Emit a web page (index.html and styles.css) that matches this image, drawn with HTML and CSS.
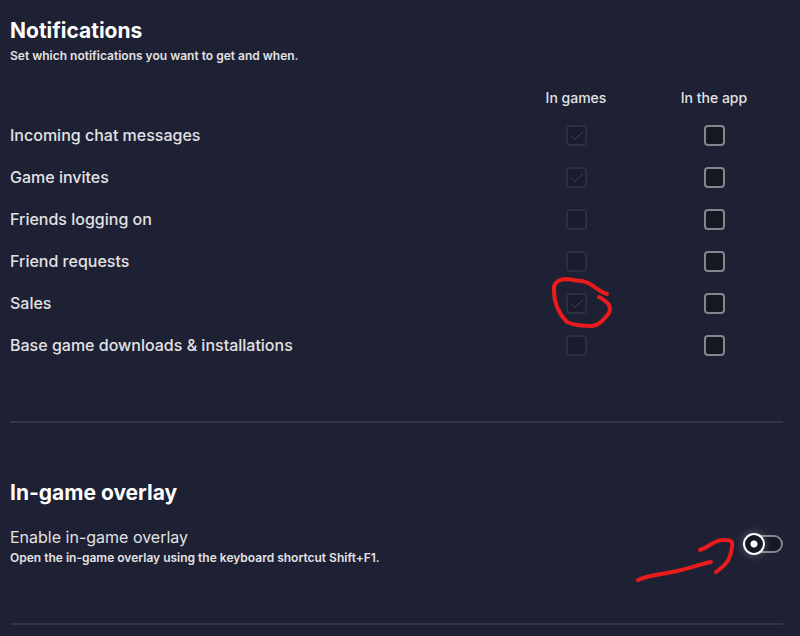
FILE: index.html
```html
<!DOCTYPE html>
<html lang="en">

<head>
    <meta charset="UTF-8">
    <meta name="viewport" content="width=device-width, initial-scale=1.0">
    <title>Settings</title>
    <link rel="stylesheet" href="styles.css">
</head>
<body>
<main class="settings">
    <section class="section">
        <h2>Notifications</h2>
        <p class="hint">Set which notifications you want to get and when.</p>
        <table class="options">
            <thead>
                <tr>
                    <td></td>
                    <th scope="col" id="games">In games</th>
                    <th scope="col" id="app">In the app</th>
                </tr>
            </thead>
            <tbody>
                <tr>
                    <th scope="row" id="chat">Incoming chat messages</th>
                    <td><input type="checkbox" class="check" aria-labelledby="chat games" checked disabled></td>
                    <td><input type="checkbox" class="check" aria-labelledby="chat app"></td>
                </tr>
                <tr>
                    <th scope="row" id="invites">Game invites</th>
                    <td><input type="checkbox" class="check" aria-labelledby="invites games" checked disabled></td>
                    <td><input type="checkbox" class="check" aria-labelledby="invites app"></td>
                </tr>
                <tr>
                    <th scope="row" id="friends">Friends logging on</th>
                    <td><input type="checkbox" class="check" aria-labelledby="friends games" disabled></td>
                    <td><input type="checkbox" class="check" aria-labelledby="friends app"></td>
                </tr>
                <tr>
                    <th scope="row" id="requests">Friend requests</th>
                    <td><input type="checkbox" class="check" aria-labelledby="requests games" disabled></td>
                    <td><input type="checkbox" class="check" aria-labelledby="requests app"></td>
                </tr>
                <tr>
                    <th scope="row" id="sales">Sales</th>
                    <td>
                        <div class="marked">
                            <input type="checkbox" class="check" aria-labelledby="sales games" checked disabled>
                            <svg class="circle-mark" width="64" height="56" viewBox="0 0 64 56" aria-hidden="true">
                                <path d="M57 19C47 16 43 8 32 6C25 6 22 4 15 4C7 5 3 9 4 15C4 26 8 38 17 47C23 50 35 51 42 51C50 50 54 44 59 38C62 31 58 27 49 22"/>
                            </svg>
                        </div>
                    </td>
                    <td><input type="checkbox" class="check" aria-labelledby="sales app"></td>
                </tr>
                <tr>
                    <th scope="row" id="downloads">Base game downloads &amp; installations</th>
                    <td><input type="checkbox" class="check" aria-labelledby="downloads games" disabled></td>
                    <td><input type="checkbox" class="check" aria-labelledby="downloads app"></td>
                </tr>
            </tbody>
        </table>
    </section>

    <section class="section">
        <h2>In-game overlay</h2>
        <div class="overlay-row">
            <div>
                <label class="title" for="overlay">Enable in-game overlay</label>
                <p class="hint" id="overlayHint">Open the in-game overlay using the keyboard shortcut Shift+F1.</p>
            </div>
            <svg class="arrow-mark" width="104" height="54" viewBox="0 0 104 54" aria-hidden="true">
                <path d="M4 46C14 41 30 40 38 38C52 36 62 31 77 28"/>
                <path d="M66 16C77 12 80 6 89 6C98 6 99 7 98 13C96 28 91 31 82 38"/>
            </svg>
            <input type="checkbox" role="switch" class="switch" id="overlay" aria-describedby="overlayHint">
        </div>
    </section>
</main>
</body>
</html>
```

FILE: styles.css
```css
*,
*::before,
*::after {
    box-sizing: border-box;
}

body {
    margin: 0;
    background-color: #1e2033;
    color: #e2e2e5;
    font-family: Inter, "Liberation Sans", sans-serif;
    font-weight: 500;
}

.settings {
    padding: 0 17px 0 10px;
}

.section {
    padding: 16px 0 55px;
    border-bottom: 2px solid #32344a;
}

.section + .section {
    padding-top: 55px;
}

h2 {
    margin: 0;
    color: #fff;
    font-size: 21px;
    font-weight: 700;
    line-height: 29px;
}

p {
    margin: 0;
}

.hint {
    font-size: 12px;
    font-weight: 600;
    line-height: 20px;
}

h2 + .hint {
    margin-top: 1px;
}

/* notification options */
.options {
    width: 100%;
    margin-top: 16px;
    table-layout: fixed;
    border-collapse: collapse;
}

.options th,
.options td {
    height: 42px;
    padding: 0;
    font-size: 16px;
    font-weight: 500;
    line-height: 20px;
    text-align: left;
    vertical-align: middle;
}

.options thead th,
.options thead td {
    height: 32px;
    font-size: 14px;
    text-align: center;
}

.options th + th,
.options td + th,
.options td {
    width: 138px;
    text-align: center;
}

.options thead td:first-child {
    width: auto;
}

.check {
    appearance: none;
    display: block;
    width: 21px;
    height: 21px;
    margin: 0 auto;
    background: #151823;
    border: 2px solid #85858d;
    border-radius: 4px;
}

.check:disabled {
    background: #1a1c2b;
    border-color: #2d2f41;
}

.check:checked::before {
    content: "";
    display: block;
    width: 12px;
    height: 6px;
    margin: 4px 3px;
    border-left: 1px solid #3a3c4c;
    border-bottom: 1px solid #3a3c4c;
    transform: rotate(-45deg);
}

.marked {
    position: relative;
    width: 21px;
    margin: 0 auto;
}

/* overlay switch */
.overlay-row {
    position: relative;
    display: flex;
    justify-content: space-between;
    align-items: flex-start;
    margin-top: 19px;
}

.title {
    display: block;
    font-size: 16px;
    font-weight: 400;
    line-height: 22px;
}

.switch {
    appearance: none;
    position: relative;
    flex-shrink: 0;
    width: 40px;
    height: 22px;
    margin: 7px 0 0;
}

.switch::before {
    content: "";
    position: absolute;
    inset: 2px 0 2px 8px;
    background: #151823;
    border: 2px solid #85858d;
    border-radius: 9px;
}

.switch::after {
    content: "";
    position: absolute;
    top: 0;
    left: 0;
    width: 22px;
    height: 22px;
    background: radial-gradient(circle, #fff 3px, #151823 4px);
    border: 2px solid #fff;
    border-radius: 50%;
    box-shadow: 0 0 10px rgba(255, 255, 255, 0.3);
}

/* red pen marks */
.circle-mark,
.arrow-mark {
    position: absolute;
    fill: none;
    stroke: #e81c1c;
    stroke-width: 4px;
    stroke-linecap: round;
    stroke-linejoin: round;
    pointer-events: none;
}

.circle-mark {
    top: -18px;
    left: -16px;
}

.arrow-mark {
    top: 8px;
    right: 45px;
}
```
